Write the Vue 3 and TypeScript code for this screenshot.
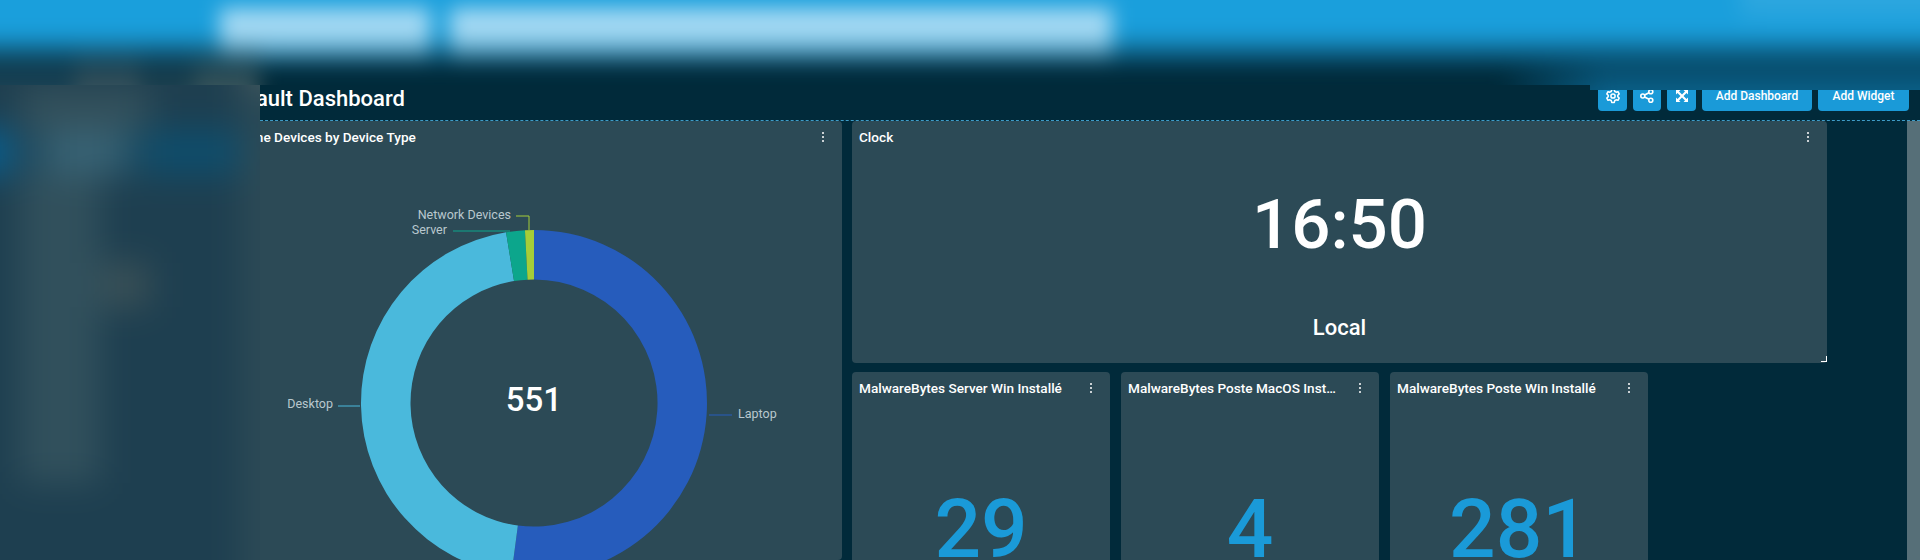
<template>
  <div class="page">
    <!-- blurred header, laid over the top of the page -->
    <div class="top-cover">
      <div class="top-cover__layer">
        <div class="top-cover__bar">
          <div class="top-cover__search top-cover__search--short"></div>
          <div class="top-cover__search top-cover__search--long"></div>
          <div class="top-cover__user"></div>
        </div>
        <div class="top-cover__sub">
          <div class="top-cover__crumb"></div>
          <div class="top-cover__fade"></div>
        </div>
      </div>
    </div>

    <!-- blurred side menu -->
    <div class="side-cover">
      <div class="side-cover__layer">
        <div class="side-cover__nav">
          <div v-for="row in navRows" :key="row.id" class="side-cover__row" :class="row.cls"></div>
        </div>
        <div class="side-cover__rest"></div>
      </div>
    </div>

    <main class="main">
      <header class="toolbar">
        <h1 class="toolbar__title">Default Dashboard</h1>
        <div class="toolbar__actions">
          <button class="btn btn--icon" type="button" aria-label="Settings">
            <svg viewBox="0 0 16 16" width="16" height="16" fill="none" stroke="#fff" stroke-width="1.5" stroke-linejoin="round">
              <path d="M6.7 1.6h2.6l.5 1.9 1.3.7 1.9-.5 1.200 2.200-1.400 1.400v1.400l1.400 1.400-1.200 2.200-1.900-.5-1.300.7-.5 1.900H6.700l-.5-1.900-1.300-.7-1.900.5-1.200-2.200 1.400-1.400V7.300L1.800 5.900 3 3.700l1.900.5 1.300-.7z" />
              <circle cx="8" cy="8" r="2.1" />
            </svg>
          </button>
          <button class="btn btn--icon btn--share" type="button" aria-label="Share">
            <svg viewBox="0 0 16 16" width="16" height="16" fill="none" stroke="#fff" stroke-width="1.6">
              <circle cx="3.8" cy="8" r="2" />
              <circle cx="11.8" cy="3.8" r="2" />
              <circle cx="11.8" cy="12.2" r="2" />
              <path d="M5.6 7 10 4.7M5.6 9 10 11.3" />
            </svg>
          </button>
          <button class="btn btn--icon" type="button" aria-label="Full screen">
            <svg viewBox="0 0 16 16" width="16" height="16" fill="#fff">
              <path d="M2 2h4.500L5 3.500 8 6.500l3-3L9.500 2H14v4.500L12.500 5l-3 3 3 3L14 9.500V14H9.500l1.500-1.500-3-3-3 3L6.500 14H2V9.500L3.500 11l3-3-3-3L2 6.500z" />
            </svg>
          </button>
          <button class="btn btn--dash" type="button">Add Dashboard</button>
          <button class="btn btn--widget" type="button">Add Widget</button>
        </div>
      </header>

      <section class="board">
        <div class="board__grid">
          <article class="card card--chart">
            <div class="card__head">
              <span class="card__title">Online Devices by Device Type</span>
              <span class="kebab"><i></i><i></i><i></i></span>
            </div>
            <svg class="donut" viewBox="0 0 617 407" width="617" height="407">
              <path v-for="seg in segments" :key="seg.name" :d="seg.path" :fill="seg.color" />
              <path v-for="seg in segments" :key="seg.name + '-line'" :d="seg.line" :stroke="seg.color" fill="none" />
              <text
                v-for="seg in segments"
                :key="seg.name + '-label'"
                class="donut__label"
                :x="seg.labelX"
                :y="seg.labelY"
                :text-anchor="seg.anchor"
              >{{ seg.name }}</text>
              <text class="donut__total" :x="cx" :y="cy + 8" text-anchor="middle">{{ total }}</text>
            </svg>
          </article>

          <div class="board__right">
            <article class="card card--clock">
              <div class="card__head">
                <span class="card__title">Clock</span>
                <span class="kebab"><i></i><i></i><i></i></span>
              </div>
              <div class="clock__time">16:50</div>
              <div class="clock__zone">Local</div>
              <span class="clock__handle"></span>
            </article>

            <div class="stats">
              <article v-for="stat in stats" :key="stat.title" class="card card--stat">
                <div class="card__head">
                  <span class="card__title card__title--cut">{{ stat.title }}</span>
                  <span class="kebab"><i></i><i></i><i></i></span>
                </div>
                <div class="stat__value">{{ stat.value }}</div>
              </article>
            </div>
          </div>
        </div>
        <div class="board__scroll"></div>
      </section>
    </main>
  </div>
</template>

<script setup lang="ts">
const cx = 309
const cy = 250
const outer = 173
const inner = 123.5

const stats = [
  { title: 'MalwareBytes Server Win Installé', value: 29 },
  { title: 'MalwareBytes Poste MacOS Installé', value: 4 },
  { title: 'MalwareBytes Poste Win Installé', value: 281 },
]

const navRows = [
  { id: 1, cls: 'is-dim' },
  { id: 2, cls: 'is-active' },
  { id: 3, cls: 'is-grey' },
  { id: 4, cls: 'is-grey' },
  { id: 5, cls: 'is-warm' },
  { id: 6, cls: 'is-grey' },
  { id: 7, cls: 'is-grey' },
  { id: 8, cls: 'is-grey' },
  { id: 9, cls: 'is-grey' },
]

const total = 551

// angles in degrees, clockwise from 12 o'clock
const slices = [
  { name: 'Laptop', color: '#265cbc', from: 0, to: 187.5, line: 'M484 262H507', labelX: 513, labelY: 265, anchor: 'start' },
  { name: 'Desktop', color: '#4ab9dc', from: 187.5, to: 350.7, line: 'M113 253H135', labelX: 108, labelY: 255, anchor: 'end' },
  { name: 'Server', color: '#0ca68c', from: 350.7, to: 357, line: 'M228 78H285', labelX: 222, labelY: 81, anchor: 'end' },
  { name: 'Network Devices', color: '#a5cd39', from: 357, to: 360, line: 'M291 63H304V77', labelX: 286, labelY: 66, anchor: 'end' },
]

function point(radius: number, deg: number) {
  const rad = (deg * Math.PI) / 180
  return `${(cx + radius * Math.sin(rad)).toFixed(2)} ${(cy - radius * Math.cos(rad)).toFixed(2)}`
}

function arc(from: number, to: number) {
  const big = to - from > 180 ? 1 : 0
  return [
    `M${point(outer, from)}`,
    `A${outer} ${outer} 0 ${big} 1 ${point(outer, to)}`,
    `L${point(inner, to)}`,
    `A${inner} ${inner} 0 ${big} 0 ${point(inner, from)}`,
    'Z',
  ].join(' ')
}

const segments = slices.map((s) => ({ ...s, path: arc(s.from, s.to) }))
</script>

<style>
html,
body {
  margin: 0;
  background: #012a3a;
}
</style>

<style scoped>
.page {
  position: relative;
  width: 1920px;
  height: 560px;
  overflow: hidden;
  background: #012a3a;
  font-family: Roboto, "Liberation Sans", sans-serif;
  color: #fff;
}

.top-cover {
  position: absolute;
  top: 0;
  left: 0;
  right: 0;
  height: 90px;
  overflow: hidden;
  z-index: 3;
  background: #012a3a;
  clip-path: polygon(0 0, 100% 0, 100% 90px, 1590px 90px, 1590px 85px, 0 85px);
}

.top-cover__layer {
  position: absolute;
  top: -60px;
  left: -60px;
  right: -60px;
  height: 230px;
  filter: blur(10px);
}

.top-cover__bar {
  display: flex;
  height: 130px;
  padding: 0 0 0 280px;
  gap: 20px;
  background: linear-gradient(#1a9fdc 0 94px, #012a3a 130px);
}

.top-cover__search {
  height: 56px;
  margin-top: 68px;
  background: linear-gradient(#a4d9f3 0 26px, rgba(164, 217, 243, 0) 56px);
}

.top-cover__search--short {
  width: 210px;
}

.top-cover__search--long {
  width: 662px;
}

.top-cover__user {
  width: 240px;
  height: 90px;
  margin-left: auto;
  background: linear-gradient(#2ea7df 0 60px, rgba(46, 167, 223, 0) 90px);
}

.top-cover__sub {
  display: flex;
  justify-content: space-between;
  height: 100px;
  margin-top: -30px;
}

.top-cover__crumb {
  width: 320px;
  height: 75px;
  background: linear-gradient(90deg, #1d4558 0 135px, #3a5560 135px 200px, #1f4353 200px 255px, #3c585f 255px);
  -webkit-mask-image: linear-gradient(transparent, #000 70%);
  mask-image: linear-gradient(transparent, #000 70%);
}

.top-cover__fade {
  width: 480px;
  height: 85px;
  background: linear-gradient(90deg, rgba(10, 97, 138, 0), #0a618a 22%);
  -webkit-mask-image: linear-gradient(transparent, #000 60%);
  mask-image: linear-gradient(transparent, #000 60%);
}

.side-cover {
  position: absolute;
  top: 85px;
  left: 0;
  bottom: 0;
  width: 260px;
  overflow: hidden;
  z-index: 2;
  background: #1e3f50;
}

.side-cover__layer {
  position: absolute;
  top: -40px;
  left: -40px;
  bottom: -40px;
  width: 340px;
  display: flex;
  filter: blur(17px);
}

.side-cover__nav {
  display: flex;
  flex-direction: column;
  width: 280px;
  padding-top: 40px;
  background: #1e3f50;
}

.side-cover__row {
  width: 80px;
  height: 44px;
  margin-left: 60px;
  background: #31505c;
  flex: none;
}

.side-cover__row.is-dim {
  width: 130px;
  background: #33505b;
}

.side-cover__row.is-active {
  width: 280px;
  height: 46px;
  margin-left: 0;
  background: linear-gradient(90deg, #065f90 0 50px, #20495d 50px 85px, #376274 85px 165px, #1c4a60 165px 185px, #0e4d6c 185px);
}

.side-cover__row.is-warm {
  width: 130px;
  background: linear-gradient(90deg, #31505c 0 65%, #3a5056 65%);
}

.side-cover__rest {
  flex: 1;
  background: linear-gradient(#43595e 0 45px, #2a4956 45px 95px, #2c4a56 95px);
}

.main {
  display: flex;
  flex-direction: column;
  padding: 85px 0 0 225px;
}

.toolbar {
  display: flex;
  justify-content: space-between;
  align-items: flex-end;
  height: 35px;
  padding: 0 11px 9px 0;
  box-sizing: border-box;
}

.toolbar__title {
  margin: 0 0 -1px -3px;
  font-size: 22px;
  line-height: 26px;
  font-weight: 500;
}

.toolbar__actions {
  display: flex;
  gap: 6px;
}

.btn {
  height: 30px;
  padding: 0;
  border: none;
  border-radius: 4px;
  background: #1a9ad8;
  color: #fff;
  font: 500 12px Roboto, "Liberation Sans", sans-serif;
}

.btn--icon {
  display: flex;
  align-items: center;
  justify-content: center;
  width: 29px;
}

.btn--share {
  width: 28px;
}

.btn--dash {
  width: 110px;
}

.btn--widget {
  width: 91px;
}

.board {
  display: flex;
  height: 440px;
  box-sizing: border-box;
  border-top: 1px dashed #3f9cc7;
}

.board__grid {
  display: flex;
  flex: 1;
  gap: 10px;
}

.board__scroll {
  width: 13px;
  background: #566f78;
}

.board__right {
  display: flex;
  flex-direction: column;
  gap: 9px;
  width: 975px;
}

.card {
  position: relative;
  flex: none;
  background: #2c4a56;
  border-radius: 4px;
}

.card--chart {
  width: 617px;
}

.card__head {
  display: flex;
  align-items: center;
  justify-content: space-between;
  height: 32px;
  padding: 0 18px 0 7px;
}

.card__title {
  font-size: 13.6px;
  font-weight: 500;
  white-space: nowrap;
}

.card__title--cut {
  width: 208px;
  overflow: hidden;
  text-overflow: ellipsis;
}

.kebab {
  display: flex;
  flex-direction: column;
  gap: 2px;
}

.kebab i {
  display: block;
  width: 2px;
  height: 2px;
  border-radius: 50%;
  background: #fff;
}

.donut {
  display: block;
}

.donut__label {
  font-size: 12.5px;
  fill: #b9c8ce;
}

.donut__total {
  font-size: 33px;
  font-weight: 500;
  fill: #fff;
}

.card--clock {
  height: 242px;
  text-align: center;
}

.clock__time {
  margin-top: 32px;
  font-size: 69px;
  line-height: 80px;
  font-weight: 500;
}

.clock__zone {
  margin-top: 50px;
  font-size: 22px;
  line-height: 26px;
  font-weight: 500;
}

.clock__handle {
  position: absolute;
  right: 0;
  bottom: 1px;
  width: 5px;
  height: 5px;
  border-right: 1px solid #fff;
  border-bottom: 1px solid #fff;
}

.stats {
  display: flex;
  flex: none;
  gap: 11px;
}

.card--stat {
  width: 258px;
  height: 200px;
}

.stat__value {
  margin-top: 85px;
  font-size: 82px;
  line-height: 80px;
  font-weight: 500;
  text-align: center;
  color: #1a9ad8;
}
</style>
